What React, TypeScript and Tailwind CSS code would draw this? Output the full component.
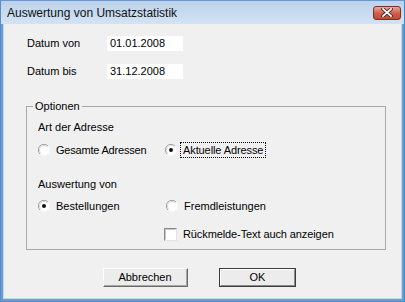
import React from "react";

const font = { fontFamily: '"Liberation Sans", Arial, sans-serif' };

const Radio = ({ checked }: { checked?: boolean }) => (
  <svg width="12" height="12" viewBox="0 0 12 12" className="shrink-0">
    <circle cx="6" cy="6" r="5.5" fill="#ffffff" />
    <path d="M10 2 A5.5 5.5 0 0 0 2 10" fill="none" stroke="#a0a0a0" strokeWidth="1" />
    <path d="M9.2 2.8 A4.5 4.5 0 0 0 2.8 9.2" fill="none" stroke="#d8d8d8" strokeWidth="1" />
    {checked && <circle cx="6" cy="6" r="2" fill="#111111" />}
  </svg>
);

const Check = () => (
  <div className="w-[13px] h-[13px] shrink-0 border border-t-[#8a8a8a] border-l-[#8a8a8a] border-r-[#e4e4e4] border-b-[#e4e4e4] bg-white">
    <div className="w-full h-full border border-t-[#c8c8c8] border-l-[#c8c8c8] border-r-white border-b-white" />
  </div>
);

const Button = ({ label, def }: { label: string; def?: boolean }) => (
  <div
    className={`h-[19px] flex items-center justify-center text-[11px] text-black bg-[#ececec] border ${
      def ? "border-[#3c3c3c]" : "border-t-white border-l-white border-r-[#6a6a6a] border-b-[#6a6a6a]"
    }`}
  >
    <div
      className={`w-full h-full flex items-center justify-center ${
        def ? "border border-t-white border-l-white border-r-[#8a8a8a] border-b-[#8a8a8a]" : "border-r border-b border-r-[#a8a8a8] border-b-[#a8a8a8]"
      }`}
    >
      {label}
    </div>
  </div>
);

export default function App() {
  return (
    <div style={font} className="w-[405px] h-[302px] overflow-hidden bg-[#6f9cd0]">
      <div className="w-[405px] h-[302px] flex flex-col border-l border-t border-r border-b border-l-[#5a8cc8] border-t-[#6d97c9] border-r-[#2a90d8] border-b-[#2aa0e0]">
        {/* title bar */}
        <div className="h-[23px] shrink-0 flex items-center justify-between pl-[6px] pr-[3px] bg-gradient-to-b from-[#bcd2ea] to-[#d3e3f4]">
          <span className="text-[12px] text-[#111] leading-none">Auswertung von Umsatzstatistik</span>
          <div className="w-[28px] h-[14px] rounded-[3px] border border-[#7a3024] bg-gradient-to-b from-[#e8a797] via-[#d0604d] to-[#c04a38] flex items-center justify-center">
            <svg width="12" height="9" viewBox="0 0 12 9">
              <path d="M2 1 L10 8 M10 1 L2 8" stroke="#3a1a16" strokeWidth="3.4" strokeLinecap="square" />
              <path d="M2 1 L10 8 M10 1 L2 8" stroke="#ffffff" strokeWidth="1.8" strokeLinecap="square" />
            </svg>
          </div>
        </div>

        {/* client area */}
        <div className="flex-1 mx-[2px] mb-[2px] bg-[#f0f0f0] text-[11px] text-black leading-[13px] border-l border-r border-b border-[#c4d8ee]">
          <div className="flex items-center h-[15px] mt-[12px] ml-[23px]">
            <span className="w-[80px]">Datum von</span>
            <div className="w-[76px] h-[15px] bg-white pl-[3px] flex items-center">01.01.2008</div>
          </div>
          <div className="flex items-center h-[15px] mt-[13px] ml-[23px]">
            <span className="w-[80px]">Datum bis</span>
            <div className="w-[76px] h-[15px] bg-white pl-[3px] flex items-center">31.12.2008</div>
          </div>

          <fieldset className="ml-[22px] mt-[21px] w-[360px] h-[150px] border border-[#a8a8a8] pl-[11px]">
            <legend className="ml-[-5px] px-[2px] h-[13px] leading-[13px]">Optionen</legend>
            <div className="mt-[8px] h-[13px]">Art der Adresse</div>
            <div className="mt-[9px] h-[14px] flex items-center">
              <div className="w-[127px] flex items-center gap-[6px]">
                <Radio />
                <span className="tracking-[-0.2px]">Gesamte Adressen</span>
              </div>
              <div className="flex items-center gap-[3px]">
                <Radio checked />
                <span className="px-[2px] border border-dotted border-black h-[16px] flex items-center tracking-[-0.1px]">Aktuelle Adresse</span>
              </div>
            </div>
            <div className="mt-[21px] h-[13px]">Auswertung von</div>
            <div className="mt-[8px] h-[14px] flex items-center">
              <div className="w-[127px] flex items-center gap-[6px]">
                <Radio checked />
                <span>Bestellungen</span>
              </div>
              <div className="flex items-center gap-[6px] pl-[1px]">
                <Radio />
                <span>Fremdleistungen</span>
              </div>
            </div>
            <div className="mt-[14px] h-[14px] flex items-center pl-[126px] gap-[6px]">
              <Check />
              <span className="tracking-[-0.1px]">Rückmelde-Text auch anzeigen</span>
            </div>
          </fieldset>

          <div className="flex mt-[18px] ml-[99px] gap-[31px]">
            <div className="w-[85px]">
              <Button label="Abbrechen" />
            </div>
            <div className="w-[77px]">
              <Button label="OK" def />
            </div>
          </div>
        </div>
      </div>
    </div>
  );
}
